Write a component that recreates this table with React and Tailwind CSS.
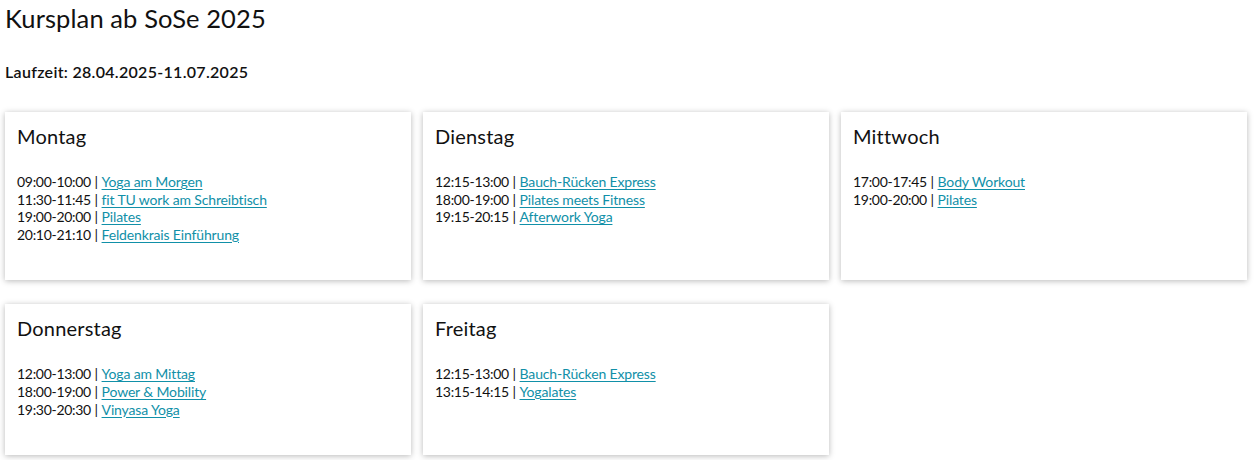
const days = [
    {
        name: "Montag",
        courses: [
            ["09:00-10:00", "Yoga am Morgen"],
            ["11:30-11:45", "fit TU work am Schreibtisch"],
            ["19:00-20:00", "Pilates"],
            ["20:10-21:10", "Feldenkrais Einführung"],
        ],
    },
    {
        name: "Dienstag",
        courses: [
            ["12:15-13:00", "Bauch-Rücken Express"],
            ["18:00-19:00", "Pilates meets Fitness"],
            ["19:15-20:15", "Afterwork Yoga"],
        ],
    },
    {
        name: "Mittwoch",
        courses: [
            ["17:00-17:45", "Body Workout"],
            ["19:00-20:00", "Pilates"],
        ],
    },
    {
        name: "Donnerstag",
        courses: [
            ["12:00-13:00", "Yoga am Mittag"],
            ["18:00-19:00", "Power & Mobility"],
            ["19:30-20:30", "Vinyasa Yoga"],
        ],
    },
    {
        name: "Freitag",
        courses: [
            ["12:15-13:00", "Bauch-Rücken Express"],
            ["13:15-14:15", "Yogalates"],
        ],
    },
];

const DayCard = ({ day }) => {
    return (
        <div className="bg-white px-3 pt-3 pb-[37px] shadow-[0_1px_6px_rgba(0,0,0,0.28)]">
            <h2 className="text-[20px] leading-[24px] tracking-[0.2px]">{day.name}</h2>
            <ul className="mt-[25px] text-[14px] leading-[17.6px]">
                {day.courses.map(([time, title]) => (
                    <li key={time + title}>
                        <span className="tracking-[-0.3px]">{time}</span> |{" "}
                        <a href="#" className="text-[#1190a8] underline underline-offset-2 tracking-[-0.15px]">
                            {title}
                        </a>
                    </li>
                ))}
            </ul>
        </div>
    );
};

const App = () => {
    return (
        <div className="min-h-[460px] bg-white px-[5px] font-['Lato','Noto_Sans',sans-serif] text-[#111] [font-variant-ligatures:none]">
            <h1 className="text-[25.5px] leading-[36px] tracking-[0.1px]">Kursplan ab SoSe 2025</h1>
            <p className="mt-[27px] text-[16px] leading-[18px] font-semibold tracking-[0.3px]">Laufzeit: 28.04.2025-11.07.2025</p>
            <div className="mt-[31px] grid w-[1242px] grid-cols-3 gap-x-3 gap-y-6 pb-2">
                {days.map((day) => (
                    <DayCard key={day.name} day={day} />
                ))}
            </div>
        </div>
    );
};

export default App;
